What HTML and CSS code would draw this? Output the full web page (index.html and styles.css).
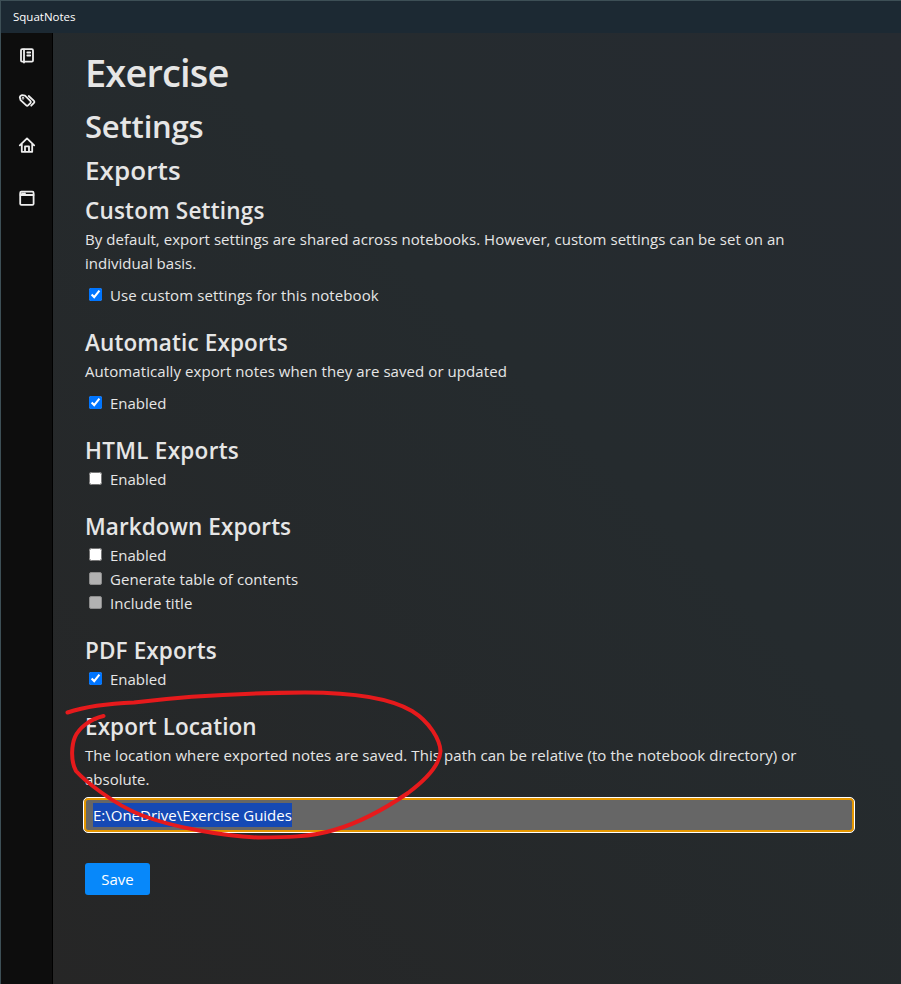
FILE: index.html
```html
<!DOCTYPE html>
<html lang="en">
<head>
<meta charset="utf-8">
<title>SquatNotes</title>
<link rel="stylesheet" href="styles.css">
</head>
<body>
<div class="window">
  <header class="titlebar"><span class="app-name">SquatNotes</span></header>
  <div class="shell">
    <nav class="sidebar">
      <svg class="icon" viewBox="0 0 16 16"><rect x="2" y="2.200" width="12" height="12.400" rx="1.200"/><path d="M5 2.500v13M8.300 5.500h2.900M8.300 8.500h2.900"/></svg>
      <svg class="icon" viewBox="0 0 16 16"><path d="M.8 5.200 1.600 3.800 3.200 3.100 6 3.600l5.300 5.200c.8.9.8 1.600.1 2.300L9.300 13.200c-.8.8-1.500.8-2.300 0L1.600 8.200Z"/><path d="m9.700 4 5 4.700c.9.9.9 1.600 0 2.400l-2.500 2.600"/><circle cx="4" cy="6.200" r=".4"/></svg>
      <svg class="icon" viewBox="0 0 16 16"><path d="M.8 8.400 8 1.400l7.200 7M2.800 7v7.800h10.400V7M6 14.500V9.400h4v5.100"/></svg>
      <svg class="icon window-icon" viewBox="0 0 16 16"><rect x="1.200" y="1.700" width="13.400" height="13.200" rx="1.200"/><path d="M1.500 5h13M3 3.300h.6M5 3.300h1"/></svg>
    </nav>
    <main class="content">
      <h1>Exercise</h1>
      <h2>Settings</h2>
      <h3>Exports</h3>
      <section>
        <h4 class="t-custom">Custom Settings</h4>
        <p><span class="p1">By default, export settings are shared across notebooks. However, custom settings can be set on an</span><br><span>individual basis.</span></p>
        <label><input type="checkbox" checked><span class="l-use">Use custom settings for this notebook</span></label>
      </section>
      <section>
        <h4 class="t-auto">Automatic Exports</h4>
        <p><span class="p3">Automatically export notes when they are saved or updated</span></p>
        <label><input type="checkbox" checked><span>Enabled</span></label>
      </section>
      <section>
        <h4 class="t-html">HTML Exports</h4>
        <label><input type="checkbox"><span>Enabled</span></label>
      </section>
      <section>
        <h4>Markdown Exports</h4>
        <label><input type="checkbox"><span>Enabled</span></label>
        <label><input type="checkbox" disabled><span class="l-toc">Generate table of contents</span></label>
        <label><input type="checkbox" disabled><span class="l-toc">Include title</span></label>
      </section>
      <section>
        <h4 class="t-auto">PDF Exports</h4>
        <label><input type="checkbox" checked><span>Enabled</span></label>
      </section>
      <section>
        <h4>Export Location</h4>
        <p class="tight"><span class="p4">The location where exported notes are saved. This path can be relative (to the notebook directory) or</span><br><span>absolute.</span></p>
        <div class="field"><span class="selected">E:\OneDrive\Exercise Guides</span></div>
      </section>
      <button class="save">Save</button>
    </main>
  </div>
  <svg class="marker" viewBox="0 0 901 984"><path d="M67.500 712.500C84 707 108 703.500 134 702.500C186 696 245 693 305 692.500C356 692.500 390 698 412 711C430 722 440 740 440.500 751C440 766 424 781 408 793C386 808 359 823 334 830C311 837 285 837.500 258 837.500C223 836 175 828 141 815C113 804 84 780 76 771C70 760 72 744 75 737C79 728 90 719 103.500 716"/></svg>
</div>
</body>
</html>
```

FILE: styles.css
```css
* { box-sizing: border-box; }
body { margin: 0; font: 15px/24px "Open Sans", "Noto Sans", sans-serif; color: #e6e6e6; }
.window { position: relative; height: 984px; display: flex; flex-direction: column; border-top: 1px solid #3d4f56; border-left: 1px solid #3d4f56; background: #1c2933; overflow: hidden; }
.titlebar { height: 32px; flex: none; display: flex; align-items: center; padding: 0 0 0 12px; color: #fff; font-size: 11.5px; }
.shell { flex: 1; display: flex; }
.sidebar { width: 52px; flex: none; background: #0d0d0d; border-right: 1px solid #000; display: flex; flex-direction: column; align-items: center; padding-top: 14px; gap: 29px; }
.icon { width: 16px; height: 16px; fill: none; stroke: #eee; stroke-width: 1.8; stroke-linejoin: round; stroke-linecap: round; overflow: visible; }
.window-icon { margin-top: 8px; }
.content { flex: 1; background: linear-gradient(45deg, #262626, #252b2e 60%, #262b31); padding: 15px 46px 0 32px; white-space: nowrap; }
h1, h2, h3, h4 { margin: 0; font-weight: 600; width: max-content; }
h1 { font-size: 38px; line-height: 48px; margin-bottom: 11px; letter-spacing: -0.85px; }
h2 { font-size: 31px; line-height: 38px; margin-bottom: 8px; letter-spacing: -0.2px; }
h3 { font-size: 26px; line-height: 34px; margin-bottom: 9px; letter-spacing: 0.1px; }
h4 { font-size: 22.500px; line-height: 30px; margin-bottom: 1px; letter-spacing: 0.08px; }
.t-custom { letter-spacing: 0.2px; }
.t-auto { letter-spacing: 0.12px; }
.t-html { letter-spacing: 0.28px; }
.p1 { letter-spacing: 0.045px; }
.p3 { letter-spacing: 0.075px; }
.p4 { letter-spacing: 0.08px; }
.l-use { letter-spacing: 0.1px; }
.l-toc { letter-spacing: 0.05px; }
section { margin-bottom: 21px; }
p { margin: 0 0 8px; }
.tight { margin-bottom: 6px; }
label { display: flex; align-items: flex-start; height: 24px; }
input { width: 13px; height: 13px; margin: 5px 8px 0 4px; flex: none; }
input:disabled { appearance: none; background: #b2b2b2; border: 1px solid #8c8c8c; border-radius: 2px; }
.field { height: 36px; width: 772px; margin-left: -2px; border: 1px solid #fff; border-radius: 5px; background: #666; box-shadow: inset 0 0 0 2px #e59700; padding: 5px 9px; color: #fff; }
.selected { display: inline-block; height: 24px; background: #1549b5; letter-spacing: -0.01px; }
.save { display: block; width: 65px; height: 32px; margin-top: 30px; border: 0; border-radius: 3px; background: #0788fa; color: #fff; font: inherit; }
.marker { position: absolute; left: -1px; top: -1px; width: 901px; height: 984px; pointer-events: none; fill: none; stroke: #e61a1c; stroke-width: 4; stroke-linecap: round; stroke-linejoin: round; }
```
